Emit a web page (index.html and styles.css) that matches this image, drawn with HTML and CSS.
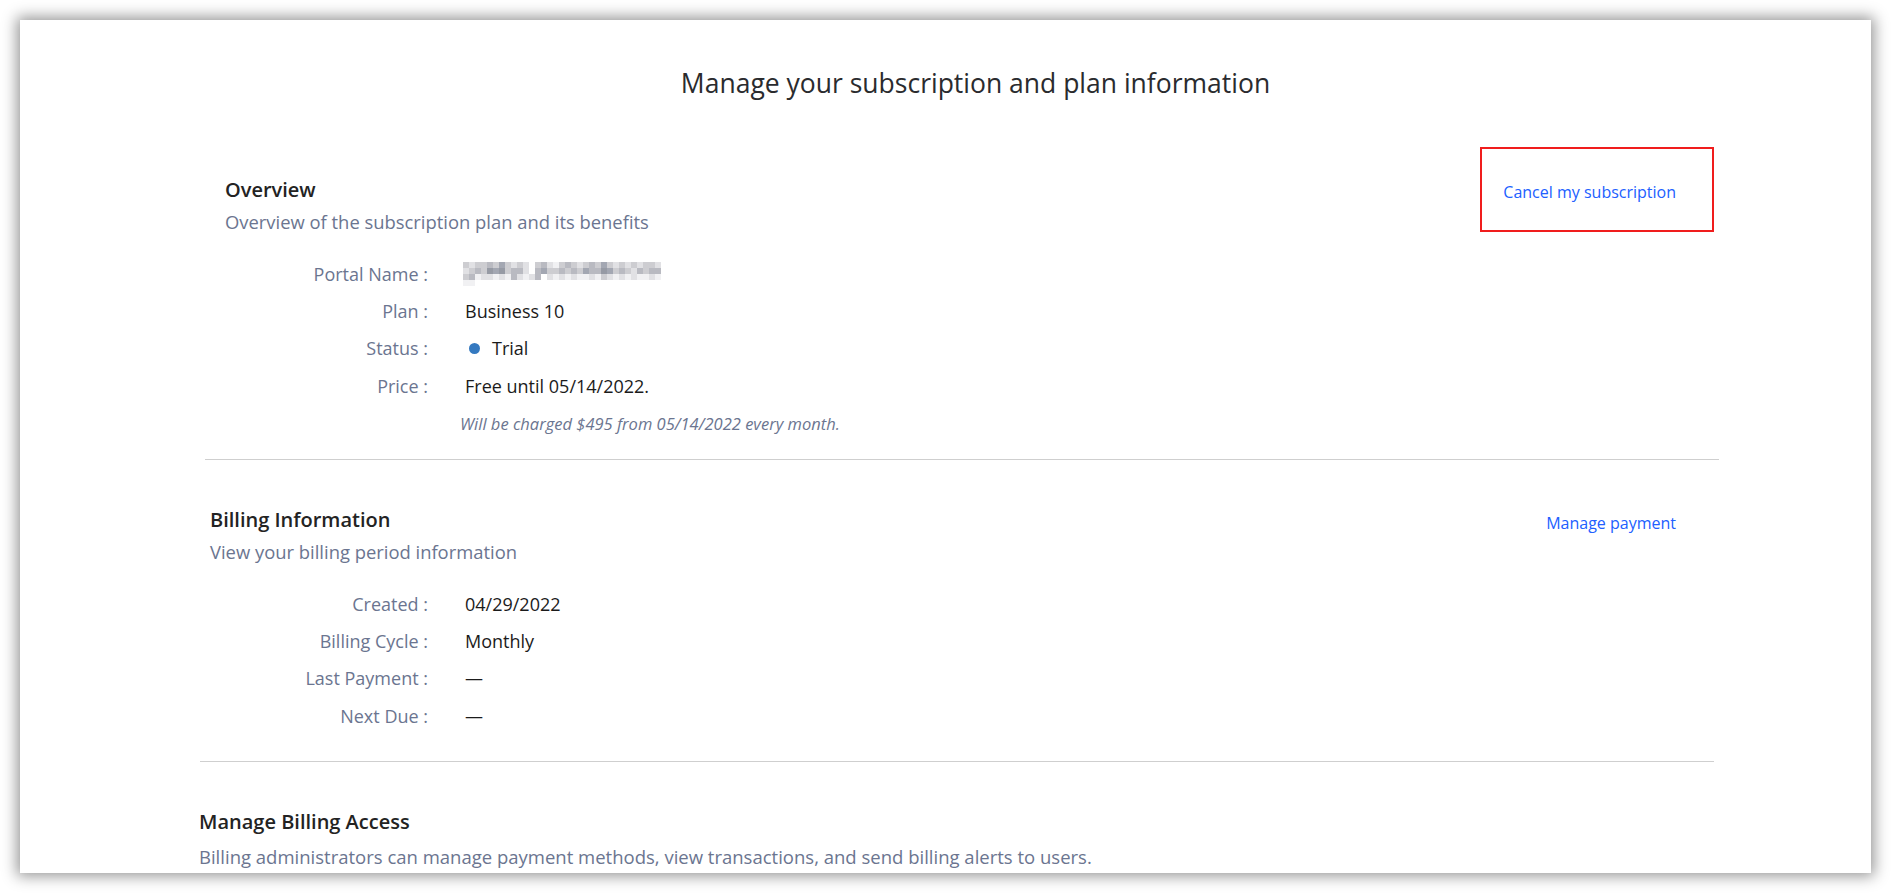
FILE: index.html
```html
<!DOCTYPE html>
<html lang="en">
<head>
<meta charset="utf-8">
<title>Manage subscription</title>
<link rel="stylesheet" href="styles.css">
</head>
<body>
<div class="panel">
  <div class="title-wrap"><h1 class="title">Manage your subscription and plan information</h1></div>
  <div class="content">
    <section class="section overview">
      <div class="head-row">
        <div class="head-text">
          <h2 class="sec-title">Overview</h2>
          <p class="sec-sub">Overview of the subscription plan and its benefits</p>
        </div>
        <div class="cancel-box"><a class="link">Cancel my subscription</a></div>
      </div>
      <div class="rows">
        <div class="row"><span class="label">Portal Name :</span><span class="value">
          <span class="mosaic">
            <i class="c"></i><i class="b"></i><i class="c"></i><i class="c"></i><i class="d"></i><i class="c"></i><i class="e"></i><i class="c"></i><i class="b"></i><i class="c"></i><i class="b"></i><i class="w"></i><i class="c"></i><i class="d"></i><i class="b"></i><i class="a"></i><i class="c"></i><i class="d"></i><i class="c"></i><i class="b"></i><i class="c"></i><i class="d"></i><i class="c"></i><i class="e"></i><i class="c"></i><i class="b"></i><i class="c"></i><i class="b"></i><i class="c"></i><i class="b"></i><i class="c"></i><i class="c"></i><i class="b"></i>
            <i class="b"></i><i class="c"></i><i class="d"></i><i class="c"></i><i class="f"></i><i class="e"></i><i class="f"></i><i class="c"></i><i class="d"></i><i class="d"></i><i class="b"></i><i class="w"></i><i class="d"></i><i class="e"></i><i class="c"></i><i class="c"></i><i class="d"></i><i class="c"></i><i class="d"></i><i class="c"></i><i class="e"></i><i class="d"></i><i class="d"></i><i class="f"></i><i class="e"></i><i class="c"></i><i class="d"></i><i class="c"></i><i class="b"></i><i class="d"></i><i class="c"></i><i class="d"></i><i class="d"></i><i class="c"></i><i class="d"></i>
            <i class="a"></i><i class="b"></i><i class="b"></i><i class="a"></i><i class="b"></i><i class="a"></i><i class="d"></i><i class="b"></i><i class="a"></i><i class="b"></i><i class="d"></i><i class="w"></i><i class="b"></i><i class="a"></i><i class="b"></i><i class="a"></i><i class="b"></i><i class="a"></i><i class="a"></i><i class="b"></i><i class="a"></i><i class="c"></i><i class="b"></i><i class="a"></i><i class="b"></i><i class="a"></i><i class="b"></i><i class="a"></i><i class="a"></i><i class="b"></i><i class="a"></i><i class="a"></i><i class="a"></i>
          </span></span></div>
        <div class="row"><span class="label">Plan :</span><span class="value">Business 10</span></div>
        <div class="row"><span class="label">Status :</span><span class="value status"><span class="dot"></span>Trial</span></div>
        <div class="row"><span class="label">Price :</span><span class="value">Free until 05/14/2022.</span></div>
      </div>
      <p class="note">Will be charged $495 from 05/14/2022 every month.</p>
    </section>
    <hr class="divider div1">
    <section class="section billing">
      <div class="head-row">
        <div class="head-text">
          <h2 class="sec-title">Billing Information</h2>
          <p class="sec-sub">View your billing period information</p>
        </div>
        <a class="link manage">Manage payment</a>
      </div>
      <div class="rows">
        <div class="row"><span class="label">Created :</span><span class="value">04/29/2022</span></div>
        <div class="row"><span class="label">Billing Cycle :</span><span class="value">Monthly</span></div>
        <div class="row"><span class="label">Last Payment :</span><span class="value">—</span></div>
        <div class="row"><span class="label">Next Due :</span><span class="value">—</span></div>
      </div>
    </section>
    <hr class="divider div2">
    <section class="section access">
      <h2 class="sec-title">Manage Billing Access</h2>
      <p class="sec-sub access-sub">Billing administrators can manage payment methods, view transactions, and send billing alerts to users.</p>
    </section>
  </div>
</div>
</body>
</html>
```
FILE: styles.css
```css
* { box-sizing: border-box; }
html, body { margin: 0; padding: 0; background: #ffffff; }
body {
  font-family: "Open Sans", Lato, "Liberation Sans", sans-serif;
  color: #1b1b1b;
  padding: 20px;
  height: 893px;
  overflow: hidden;
}
.panel {
  width: 1851px;
  height: 853px;
  background: #ffffff;
  box-shadow: 0 0 14px 3px rgba(0, 0, 0, 0.42);
  overflow: hidden;
  padding-top: 47px;
}
.title-wrap {
  padding-left: 60px;
  display: flex;
  justify-content: center;
}
.title {
  margin: 0;
  font-size: 26.5px;
  line-height: 32px;
  font-weight: 500;
  color: #2a2b2e;
}
.content {
  margin-left: 179px;
  width: 1521px;
}
.section { display: flex; flex-direction: column; }
.head-row {
  display: flex;
  justify-content: space-between;
  align-items: flex-start;
}
.sec-title {
  margin: 0;
  font-size: 20px;
  line-height: 24px;
  font-weight: 600;
  color: #232323;
}
.sec-sub {
  margin: 9px 0 0;
  font-size: 18.4px;
  line-height: 22px;
  color: #6b7590;
}
.access-sub { margin-top: 12px; font-size: 18.5px; }
.overview { margin-top: 48px; padding-left: 26px; padding-right: 6px; }
.overview .head-text { padding-top: 31px; }
.cancel-box {
  width: 234px;
  height: 85px;
  border: 2px solid #f01d1d;
  display: flex;
  align-items: center;
  justify-content: flex-end;
  padding-right: 36px;
  padding-top: 5px;
}
.link {
  color: #2160ff;
  font-size: 16px;
  line-height: 20px;
  cursor: pointer;
}
.manage { margin-top: 5px; margin-right: 38px; }
.rows { margin-top: 22px; display: flex; flex-direction: column; }
.overview .rows { margin-left: -26px; }
.billing .rows { margin-left: -11px; }
.row {
  display: flex;
  align-items: center;
  height: 37.3px;
  font-size: 18px;
}
.label {
  width: 229px;
  text-align: right;
  color: #6b7590;
}
.value {
  margin-left: 37px;
  color: #1b1b1b;
  display: flex;
  align-items: center;
}
.dot {
  width: 11px;
  height: 11px;
  border-radius: 50%;
  background: #3479c0;
  margin-left: 4px;
  margin-right: 12px;
}
.mosaic {
  display: grid;
  grid-template-columns: repeat(33, 6px);
  grid-auto-rows: 6px;
  margin-left: -2px;
}
.mosaic i { display: block; }
.mosaic .w { background: #ffffff; }
.mosaic .a { background: #f1f1f3; }
.mosaic .b { background: #e1e1e4; }
.mosaic .c { background: #cdcdd1; }
.mosaic .d { background: #b9bac1; }
.mosaic .e { background: #a3a7b2; }
.mosaic .f { background: #969aa4; }
.note {
  margin: 10px 0 0 235px;
  font-size: 16.5px;
  line-height: 20px;
  font-style: italic;
  color: #6b7590;
}
.divider {
  border: 0;
  border-top: 1px solid #cfcfcf;
  height: 0;
  margin: 0;
  width: 1514px;
}
.div1 { margin-top: 25px; margin-left: 6px; }
.billing { margin-top: 48px; padding-left: 11px; padding-right: 0; width: 1515px; }
.div2 { margin-top: 27px; margin-left: 1px; }
.access { margin-top: 48px; }
```
